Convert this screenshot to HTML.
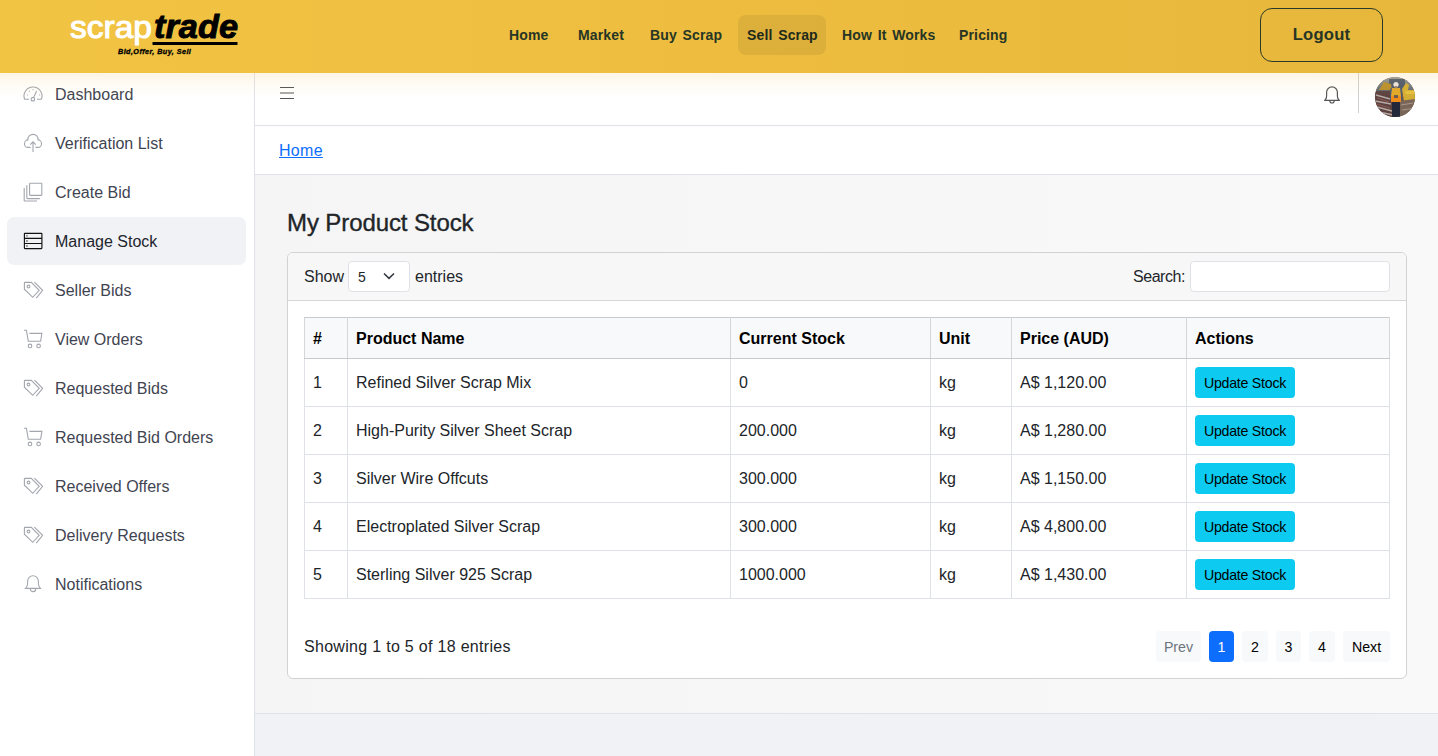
<!DOCTYPE html>
<html><head><meta charset="utf-8">
<style>
*{box-sizing:border-box;margin:0;padding:0}
html,body{width:1438px;height:756px;overflow:hidden;font-family:"Liberation Sans",sans-serif;background:#fff;color:#212529}
.abs{position:absolute}
.hdr{position:absolute;left:0;top:0;width:1438px;height:73px;background:linear-gradient(90deg,#f2c443 0%,#eebd40 50%,#e6b73b 100%);z-index:3}
.shadow{position:absolute;left:0;top:73px;width:1438px;height:26px;background:linear-gradient(180deg,rgba(252,190,80,0.16),rgba(252,190,80,0.06) 45%,rgba(252,190,80,0));z-index:2;pointer-events:none}
.nav{position:absolute;left:0;top:15px;width:1438px;height:40px;line-height:40px;font-weight:bold;font-size:14px;color:#263524;letter-spacing:0.15px;word-spacing:1.6px}
.nav span{position:absolute;top:0;white-space:nowrap}
.nav .act{background:rgba(110,90,30,0.13);border-radius:8px;height:40px}
.logout{position:absolute;left:1260px;top:8px;width:123px;height:54px;border:1px solid #2b3a28;border-radius:12px;font-weight:bold;font-size:16.6px;color:#263524;text-align:center;line-height:52px;letter-spacing:0.2px}
.side{position:absolute;left:0;top:73px;width:255px;height:683px;border-right:1px solid #dfe2ea;background:#fff}
.si{position:absolute;left:7px;width:239px;height:48px;border-radius:7px}
.si.act{background:#f1f2f6}
.si .t{position:absolute;left:48px;top:1px;line-height:48px;font-size:16px;color:#3f4451;white-space:nowrap}
.si.act .t{color:#22252c}
.si svg{position:absolute;left:11px;top:10px;width:30px;height:30px}
.top{position:absolute;left:255px;top:73px;width:1183px;height:53px;border-bottom:1px solid #dfe2ea;background:#fff}
.bc{position:absolute;left:255px;top:126px;width:1183px;height:49px;border-bottom:1px solid #dfe2ea;background:#fff}
.bc a{position:absolute;left:24px;top:0;line-height:49px;font-size:16px;color:#0d6efd;text-decoration:underline;letter-spacing:0.3px}
.main{position:absolute;left:255px;top:175px;width:1183px;height:539px;background:linear-gradient(90deg,#f5f5f5,#f7f7f7 50%,#f9f9f9);border-bottom:1px solid #dfe2ea}
.foot{position:absolute;left:255px;top:714px;width:1183px;height:42px;background:#f1f2f6}
h2{position:absolute;left:287px;top:208px;-webkit-text-stroke:0.35px #212529;line-height:30px;font-size:24px;font-weight:normal;color:#212529;letter-spacing:-0.1px}
.card{position:absolute;left:287px;top:252px;width:1120px;height:427px;border:1px solid #d2d2d2;border-radius:6px;background:#fff;overflow:hidden}
.ch{position:absolute;left:0;top:0;width:1118px;height:48px;background:#f7f7f7;border-bottom:1px solid #d6d6d6}
.txt16{font-size:16px;color:#212529;white-space:nowrap}
.sel{position:absolute;left:60px;top:8px;width:62px;height:31px;border:1px solid #dee2e6;border-radius:4px;background:#fff}
.srch{position:absolute;left:902px;top:8px;width:200px;height:31px;border:1px solid #dee2e6;border-radius:4px;background:#fff}
table{position:absolute;left:304px;top:317px;border-collapse:collapse;table-layout:fixed;font-size:16px;color:#212529}
td,th{border:1px solid #dee2e6;padding:0 0 0 8px;text-align:left;white-space:nowrap;vertical-align:middle}
th{height:41px;padding-top:2px;background:#f8f9fa;font-weight:bold;color:#000;border-top-color:#c8cacc;border-bottom-color:#c8cacc}
th{border-left-color:#d4d6d8;border-right-color:#d4d6d8}
td{height:48px}
.btn{display:inline-block;width:100px;height:31px;line-height:33px;background:#0dcaf0;border-radius:4px;font-size:14.2px;letter-spacing:-0.25px;color:#000;text-align:center;position:relative;top:0;vertical-align:middle}
.pg{position:absolute;top:631px;height:31px;line-height:32px;background:#f8f9fa;border-radius:4px;font-size:14.2px;color:#000;text-align:center}
</style></head><body>
<div class="hdr">
  <svg class="abs" style="left:60px;top:5px" width="190" height="60" viewBox="0 0 190 60">
    <text x="10" y="32.5" font-family="Liberation Sans" font-size="31.5" fill="#fff" stroke="#fff" stroke-width="1.0" textLength="82" lengthAdjust="spacingAndGlyphs">scrap</text>
    <text x="94" y="32.5" font-family="Liberation Sans" font-size="33" fill="#000" stroke="#000" stroke-width="0.9" font-weight="bold" font-style="italic" textLength="84" lengthAdjust="spacingAndGlyphs">trade</text>
    <rect x="92.5" y="37" width="85" height="3" fill="#000"/>
    <text x="58" y="49" font-family="Liberation Sans" font-size="7.2" fill="#000" stroke="#000" stroke-width="0.35" font-weight="bold" font-style="italic" letter-spacing="0.45">Bid,Offer, Buy, Sell</text>
  </svg>
  <div class="nav">
    <span style="left:509px">Home</span>
    <span style="left:578px">Market</span>
    <span style="left:650px">Buy Scrap</span>
    <span class="act" style="left:738px;width:88px"></span>
    <span style="left:747px;color:#1d2a1b">Sell Scrap</span>
    <span style="left:842px">How It Works</span>
    <span style="left:959px">Pricing</span>
  </div>
  <div class="logout">Logout</div>
</div>
<div class="shadow"></div>

<div class="side">
</div>
<div class="abs" style="left:0;top:0;width:255px;height:756px;z-index:1">
  <div class="si" style="top:70px"><svg viewBox="0 0 30 30" fill="none" stroke="#a3a6ad" stroke-width="1.1"><path d="M6.6 19.3 A9 9 0 1 1 23.4 19.3"/><path d="M6.4 19.3 H11 M19 19.3 H23.6"/><rect x="13.2" y="17.6" width="3.3" height="3.3" rx="1"/><path d="M15.6 17.5 L18.6 11"/><path d="M9 15 h0.9 M11 11 l0.7 0.5 M15 9.3 v0.9 M21.2 15 h0.9" stroke-width="1.1"/></svg><span class="t">Dashboard</span></div>
  <div class="si" style="top:119px"><svg viewBox="0 0 30 30" fill="none" stroke="#a3a6ad" stroke-width="1.1"><path d="M12.6 18.4 H9.9 A3.4 3.75 0 0 1 9.9 10.9 A5.12 5.12 0 1 1 20.1 10.9 A3.4 3.75 0 0 1 20.1 18.4 H17.4"/><path d="M15 23 V13 M12.3 15.6 L15 12.8 L17.7 15.6"/></svg><span class="t">Verification List</span></div>
  <div class="si" style="top:168px"><svg viewBox="0 0 30 30" fill="none" stroke="#a3a6ad" stroke-width="1.1"><rect x="11.6" y="5.2" width="12.2" height="12.2" rx="0.6"/><path d="M8.8 7.3 V20 Q8.8 20.6 9.4 20.6 H21.8"/><path d="M6.2 10 V22.8 Q6.2 23 6.6 23 H19"/></svg><span class="t">Create Bid</span></div>
  <div class="si act" style="top:217px"><svg viewBox="0 0 30 30" fill="none" stroke="#111" stroke-width="1.15"><rect x="6.4" y="6.3" width="17.5" height="15.3" rx="0.5"/><path d="M6.4 11.4 H23.9 M6.4 16.5 H23.9"/><path d="M8.3 8.9 H9.6 M8.3 14 H9.6 M8.3 19 H9.6" stroke-width="1.3" stroke="#444"/></svg><span class="t">Manage Stock</span></div>
  <div class="si" style="top:266px"><svg viewBox="0 0 30 30" fill="none" stroke="#a3a6ad" stroke-width="1.1"><path d="M6.4 7 Q6.4 6.4 7 6.4 H13.3 L21.2 14.3 L14.7 21.3 L6.4 13.2 Z"/><circle cx="10.5" cy="10.5" r="1.4"/><path d="M16.4 6.2 L24.6 14.4 L18.3 22.1"/></svg><span class="t">Seller Bids</span></div>
  <div class="si" style="top:315px"><svg viewBox="0 0 30 30" fill="none" stroke="#a3a6ad" stroke-width="1.1"><path d="M6 5.2 H8.4 L10.3 16.3 H22.6 L23.9 8.4 H11.4"/><circle cx="12" cy="20.9" r="1.8"/><circle cx="20.6" cy="20.9" r="1.8"/></svg><span class="t">View Orders</span></div>
  <div class="si" style="top:364px"><svg viewBox="0 0 30 30" fill="none" stroke="#a3a6ad" stroke-width="1.1"><path d="M6.4 7 Q6.4 6.4 7 6.4 H13.3 L21.2 14.3 L14.7 21.3 L6.4 13.2 Z"/><circle cx="10.5" cy="10.5" r="1.4"/><path d="M16.4 6.2 L24.6 14.4 L18.3 22.1"/></svg><span class="t">Requested Bids</span></div>
  <div class="si" style="top:413px"><svg viewBox="0 0 30 30" fill="none" stroke="#a3a6ad" stroke-width="1.1"><path d="M6 5.2 H8.4 L10.3 16.3 H22.6 L23.9 8.4 H11.4"/><circle cx="12" cy="20.9" r="1.8"/><circle cx="20.6" cy="20.9" r="1.8"/></svg><span class="t">Requested Bid Orders</span></div>
  <div class="si" style="top:462px"><svg viewBox="0 0 30 30" fill="none" stroke="#a3a6ad" stroke-width="1.1"><path d="M6.4 7 Q6.4 6.4 7 6.4 H13.3 L21.2 14.3 L14.7 21.3 L6.4 13.2 Z"/><circle cx="10.5" cy="10.5" r="1.4"/><path d="M16.4 6.2 L24.6 14.4 L18.3 22.1"/></svg><span class="t">Received Offers</span></div>
  <div class="si" style="top:511px"><svg viewBox="0 0 30 30" fill="none" stroke="#a3a6ad" stroke-width="1.1"><path d="M6.4 7 Q6.4 6.4 7 6.4 H13.3 L21.2 14.3 L14.7 21.3 L6.4 13.2 Z"/><circle cx="10.5" cy="10.5" r="1.4"/><path d="M16.4 6.2 L24.6 14.4 L18.3 22.1"/></svg><span class="t">Delivery Requests</span></div>
  <div class="si" style="top:560px"><svg viewBox="0 0 30 30" fill="none" stroke="#a3a6ad" stroke-width="1.1"><path d="M7.6 18.4 Q9.6 16.4 9.6 13.5 V11.2 A5.4 5.4 0 0 1 20.4 11.2 V13.5 Q20.4 16.4 22.4 18.4 Z"/><path d="M12.3 18.9 A2.7 2.7 0 0 0 17.7 18.9"/></svg><span class="t">Notifications</span></div>
</div>

<div class="top">
  <svg class="abs" style="left:25px;top:14px" width="14" height="14" viewBox="0 0 14 14"><path d="M0 0.5 H14 M0 6 H14 M0 11.5 H14" stroke="#555" stroke-width="1"/></svg>
  <svg class="abs" style="left:1069px;top:12px" width="16" height="20" viewBox="0 0 16 20" fill="none" stroke="#555" stroke-width="1.2"><path d="M0.8 15.4 Q2.6 13.8 2.6 11 V7.3 A5.4 5.4 0 0 1 13.4 7.3 V11 Q13.4 13.8 15.2 15.4 Z"/><path d="M5.8 15.8 A2.2 2.2 0 0 0 10.2 15.8"/></svg>
  <div class="abs" style="left:1103px;top:0;width:1px;height:40px;background:#d0d0d0"></div>
  <svg class="abs" style="left:1120px;top:4px" width="40" height="40" viewBox="0 0 40 40">
    <defs><clipPath id="cc"><circle cx="20" cy="20" r="20"/></clipPath>
    <linearGradient id="sky" x1="0" y1="0" x2="0" y2="1"><stop offset="0" stop-color="#9aa0a0"/><stop offset="1" stop-color="#5e6670"/></linearGradient></defs>
    <g clip-path="url(#cc)">
      <rect width="40" height="40" fill="#6e5a50"/>
      <rect width="40" height="14" fill="url(#sky)"/>
      <rect x="14" y="2" width="16" height="10" fill="#4c5a6e"/>
      <path d="M4 13 L9 5 L16 7 L17 13 Z" fill="#b8902c"/>
      <path d="M27 12 L31 6 L34 8 L33 13 L41 13 L41 24 L29 24 Z" fill="#d4ae34"/>
      <path d="M30 14 L41 14 L41 17 L31 17 Z" fill="#e6c040"/>
      <path d="M0 14 L18 14 L20 40 L0 40 Z" fill="#5c4240"/>
      <path d="M1 18 L15 22 M0 24 L16 27 M2 30 L17 34 M4 35 L18 38" stroke="#b7aaa4" stroke-width="1.4"/>
      <path d="M2 21 L14 25 M1 27 L15 31" stroke="#8a5a50" stroke-width="1.3"/>
      <path d="M24 24 L41 22 L41 40 L24 40 Z" fill="#7a6658"/>
      <path d="M26 28 L38 26 M27 33 L40 31" stroke="#a89488" stroke-width="1.2"/>
      <rect x="15" y="11" width="12" height="13" rx="2" fill="#4a5878"/>
      <path d="M17 11 L25 11 L26 19 L16 19 Z" fill="#e2a828"/>
      <path d="M16 19 L26 19 L26 25 L16 25 Z" fill="#f08c1c"/>
      <rect x="19" y="18" width="4" height="3" fill="#6b5a50"/>
      <rect x="17" y="25" width="8" height="16" fill="#22283a"/>
      <circle cx="21" cy="7.5" r="2.6" fill="#e8e6e0"/>
      <rect x="19.8" y="9" width="2.4" height="2.2" fill="#a08070"/>
    </g>
  </svg>
</div>
<div class="bc"><a>Home</a></div>
<div class="main"></div>
<div class="foot"></div>
<h2>My Product Stock</h2>
<div class="card">
  <div class="ch">
    <span class="abs txt16" style="left:16px;top:0;line-height:48px">Show</span>
    <div class="sel"><span class="abs" style="left:9px;top:0;line-height:30px;font-size:14px;color:#212529">5</span>
      <svg class="abs" style="left:34px;top:10px" width="12" height="8" viewBox="0 0 12 8"><path d="M1 1.5 L6 6.3 L11 1.5" fill="none" stroke="#343a40" stroke-width="1.6"/></svg></div>
    <span class="abs txt16" style="left:127px;top:0;line-height:48px">entries</span>
    <span class="abs txt16" style="left:845px;top:0;line-height:48px;letter-spacing:-0.45px">Search:</span>
    <div class="srch"></div>
  </div>
  <span class="abs txt16" style="left:16px;top:378px;line-height:32px;letter-spacing:0.3px">Showing 1 to 5 of 18 entries</span>
</div>
<table>
  <colgroup><col style="width:43px"><col style="width:383px"><col style="width:200px"><col style="width:81px"><col style="width:175px"><col style="width:203px"></colgroup>
  <tr><th>#</th><th>Product Name</th><th>Current Stock</th><th>Unit</th><th>Price (AUD)</th><th>Actions</th></tr>
  <tr><td>1</td><td>Refined Silver Scrap Mix</td><td>0</td><td>kg</td><td>A$ 1,120.00</td><td><span class="btn">Update Stock</span></td></tr>
  <tr><td>2</td><td>High-Purity Silver Sheet Scrap</td><td>200.000</td><td>kg</td><td>A$ 1,280.00</td><td><span class="btn">Update Stock</span></td></tr>
  <tr><td>3</td><td>Silver Wire Offcuts</td><td>300.000</td><td>kg</td><td>A$ 1,150.00</td><td><span class="btn">Update Stock</span></td></tr>
  <tr><td>4</td><td>Electroplated Silver Scrap</td><td>300.000</td><td>kg</td><td>A$ 4,800.00</td><td><span class="btn">Update Stock</span></td></tr>
  <tr><td>5</td><td>Sterling Silver 925 Scrap</td><td>1000.000</td><td>kg</td><td>A$ 1,430.00</td><td><span class="btn">Update Stock</span></td></tr>
</table>
<div class="pg" style="left:1156px;width:45px;color:#6c757d">Prev</div>
<div class="pg" style="left:1209px;width:25px;background:#0d6efd;color:#fff">1</div>
<div class="pg" style="left:1242px;width:26px">2</div>
<div class="pg" style="left:1276px;width:25px">3</div>
<div class="pg" style="left:1309px;width:26px">4</div>
<div class="pg" style="left:1343px;width:47px">Next</div>
</body></html>
